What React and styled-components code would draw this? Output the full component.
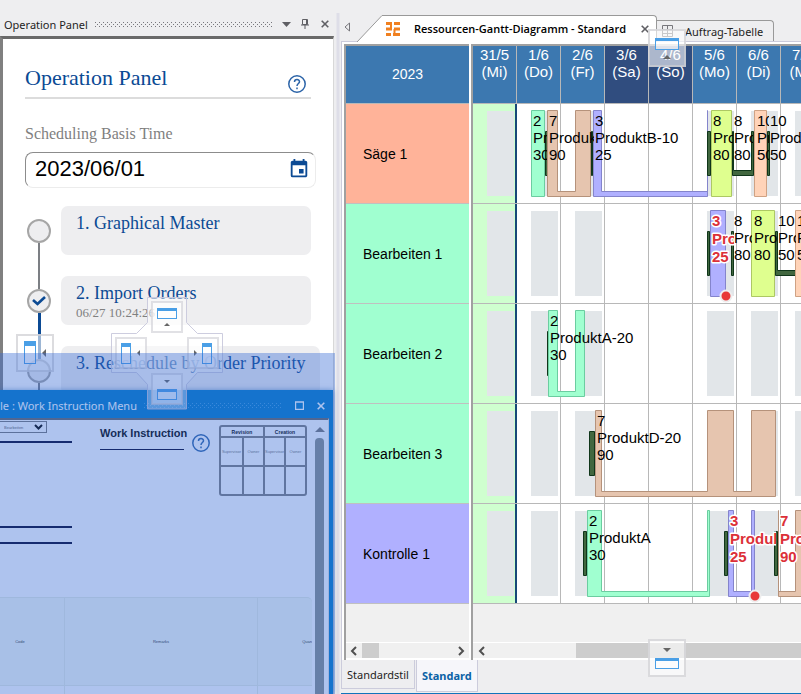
import React, { useState } from 'react';
import styled, { createGlobalStyle, css } from 'styled-components';
import { MdEvent } from 'react-icons/md';

const GlobalStyle = createGlobalStyle`
  * { box-sizing: border-box; }
  body {
    margin: 0;
    background: #eeeef0;
    font-family: "Noto Sans", "Open Sans", sans-serif;
    font-size: 12px;
    color: #1e1e1e;
    overflow: hidden;
  }
  button { font: inherit; color: inherit; border: 0; padding: 0; background: none; }
  h1, h2, p { margin: 0; font-weight: normal; }
`;

const Page = styled.div`
  display: flex;
  position: relative;
  height: 100vh;
  overflow: hidden;
`;

/* ---------- operation panel ---------- */

const Side = styled.aside`
  display: flex;
  flex-direction: column;
  flex: 0 0 334px;
  min-width: 0;
`;

const Splitter = styled.div`
  flex: 0 0 7px;
  margin-top: 13px;
  background: linear-gradient(to right, #eeeef0 2px, #dedee8 3px, #dedee8 5px, #eeeef0 6px);
`;

const Caption = styled.div`
  display: flex;
  align-items: center;
  height: 36px;
  padding: 12px 4px 0;
  font-size: 11px;
  white-space: nowrap;
`;

const Dots = styled.span`
  flex: 1;
  height: 5px;
  margin: 0 9px 0 7px;
  background-image: conic-gradient(from 270deg at 1px 1px, ${p => p.$color} 90deg, transparent 0),
    conic-gradient(from 270deg at 1px 1px, ${p => p.$color} 90deg, transparent 0);
  background-size: 4px 4px;
  background-position: 0 0, 2px 2px;
`;

const IconButton = styled.button`
  display: flex;
  align-items: center;
  justify-content: center;
  width: ${p => p.$w || 19}px;
  height: 16px;
`;

const PanelBody = styled.div`
  flex: 1;
  border: solid;
  border-width: 3px 1px 0 3px;
  border-color: #696969 #d8d8d8 #fff #808080;
  background: #fff;
  padding: 24px 22px 0;
  font-family: "Liberation Serif", serif;
`;

const PanelHead = styled.div`
  display: flex;
  justify-content: space-between;
  align-items: center;
  height: 36px;
  padding-right: 5px;
  border-bottom: 2px solid #dcdcdc;

  h1 {
    font-size: 22px;
    line-height: 28px;
    padding-bottom: 4px;
    color: #0b4a94;
  }

  svg { margin-top: 8px; }
`;

const FieldLabel = styled.label`
  display: block;
  margin: 25px 0 8px;
  font-size: 16px;
  line-height: 20px;
  color: #7f7f7f;
`;

const DateBox = styled.div`
  display: flex;
  align-items: center;
  height: 36px;
  margin-right: -5px;
  padding: 0 5px 3px 9px;
  border: 1px solid;
  border-color: #8c8c8c #ececec #ececec #8c8c8c;
  border-radius: 8px;
  color: #0b4a94;

  input {
    flex: 1;
    min-width: 0;
    padding: 0;
    border: 0;
    outline: 0;
    font: 22px "Liberation Sans", sans-serif;
    color: #000;
  }
`;

const Steps = styled.ol`
  list-style: none;
  margin: 18px 0 0;
  padding: 0;
`;

const Step = styled.li`
  display: grid;
  grid-template-columns: 28px 1fr;
  column-gap: 8px;
  height: 70px;
`;

const StepTrack = styled.div`
  display: flex;
  flex-direction: column;
  align-items: center;
  padding-top: 13px;

  &::after {
    content: "";
    width: ${p => (p.$done ? 3 : 2)}px;
    height: 46px;
    background: ${p => (p.$done ? '#0b4a94' : '#7c7f84')};
  }
`;

const StepMark = styled.span`
  display: flex;
  align-items: center;
  justify-content: center;
  flex: 0 0 24px;
  width: 24px;
  border: 2px solid #a6a6a6;
  border-radius: 50%;
  background: #eeeef0;
`;

const StepCard = styled.button`
  display: flex;
  flex-direction: column;
  align-items: flex-start;
  height: 49px;
  padding: 6px 15px;
  border-radius: 7px;
  background: #eeeef0;
  font-size: 18px;
  line-height: 22px;
  color: #0b4a94;
  white-space: nowrap;

  small {
    font-size: 13px;
    line-height: 18px;
    color: #808080;
  }
`;

/* ---------- floating window ---------- */

const Floating = styled.section`
  position: absolute;
  left: 0;
  top: 390px;
  bottom: 0;
  width: 333px;
  display: flex;
  flex-direction: column;
  padding-right: 4px;
  background: #007bc8;
  box-shadow: 0 0 5px rgba(0, 80, 160, .5);
  color: #fff;
`;

const FloatCaption = styled.header`
  display: flex;
  align-items: center;
  height: 28px;
  margin-right: -4px;
  padding-top: 3px;
  font-size: 11px;
  white-space: nowrap;
  overflow: hidden;

  h2 { font-size: inherit; }
`;

const FloatBody = styled.div`
  display: flex;
  flex: 1;
  min-height: 0;
  border-top: 2px solid #646464;
  border-right: 1px solid #e3e3e3;
  background: #fff;
  color: #000;
  font-family: "Liberation Sans", sans-serif;
`;

const Sheet = styled.div`
  flex: 1;
  min-width: 0;
  display: flex;
  flex-direction: column;
`;

const SheetTop = styled.div`
  display: flex;
  align-items: flex-start;
  height: 177px;
`;

const Fields = styled.div`
  width: 72px;
  margin-right: 28px;
`;

const Select = styled.div`
  position: relative;
  width: 47px;
  height: 12px;
  margin-top: 1px;
  border: 1px solid #777;
  border-left: 0;

  select {
    display: block;
    appearance: none;
    width: 100%;
    height: 10px;
    padding: 0 0 0 4px;
    border: 0;
    background: none;
    font: 4px "Liberation Sans", sans-serif;
    color: #666;
  }

  svg { position: absolute; right: 3px; top: 2px; pointer-events: none; }
`;

const Line = styled.div`
  height: 2px;
  margin-top: ${p => p.$gap}px;
  background: #00032c;
`;

const SheetTitle = styled.h2`
  width: 84px;
  margin-top: 5px;
  padding-bottom: 8px;
  border-bottom: 1px solid #00032c;
  font-size: 11px;
  line-height: 16px;
  font-weight: bold;
  white-space: nowrap;
`;

const HelpSlot = styled.div`
  margin: 14px 9px 0 8px;
`;

const Stamp = styled.table`
  width: 88px;
  margin-top: 5px;
  border: 2px solid #7d7d7d;
  border-radius: 3px;
  border-spacing: 0;
  table-layout: fixed;
  font-size: 4px;
  color: #777;

  th, td {
    height: 29px;
    padding: 0;
    overflow: hidden;
    text-align: center;
    border-left: 2px solid #7d7d7d;
    border-top: 2px solid #7d7d7d;
  }
  th {
    height: 9px;
    border-top: 0;
    font-size: 5px;
    color: #000;
  }
  th:first-child, td:first-child { border-left: 0; }
`;

const Items = styled.table`
  flex: 1;
  width: 312px;
  border-spacing: 0;
  table-layout: fixed;
  font-size: 4px;
  color: #333;

  th {
    height: 89px;
    padding: 0;
    overflow: hidden;
    border: solid #e6ede3;
    border-width: 1px 1px 1px 0;
    background: #f5fbf3;
    font-weight: normal;
  }
  td { border-right: 1px solid #e6ede3; }
  th:last-child { border-top-right-radius: 5px; border-right: 0; text-align: right; }
  td:last-child { border-right: 0; }
  th:first-child { padding-right: 24px; }
`;

const Scroller = styled.div`
  display: flex;
  flex-direction: column;
  align-items: center;
  width: 15px;
  padding: 7px 2px 0 0;

  &::after {
    content: "";
    flex: 1;
    width: 9px;
    margin-top: 6px;
    border-radius: 4px 4px 0 0;
    background: #878e8a;
  }
`;

/* ---------- document area ---------- */

const Documents = styled.main`
  position: relative;
  display: flex;
  flex-direction: column;
  flex: 1;
  min-width: 0;
  border-bottom: 1px solid #1174bb;
`;

const TabStrip = styled.div`
  display: flex;
  align-items: flex-end;
  height: 42px;
  flex: none;
  white-space: nowrap;
  border-bottom: 1px solid #ccccdc;
`;

const ScrollTabs = styled.button`
  display: flex;
  width: 16px;
  padding: 0 0 9px 3px;
`;

const ActiveTab = styled.div`
  display: flex;
  height: 27px;
  margin-bottom: -1px;
`;

const TabFace = styled.div`
  display: flex;
  align-items: center;
  gap: 14px;
  padding: 0 7px 1px 4px;
  border: 1px solid #999;
  border-width: 1px 1px 0 0;
  border-radius: 0 4px 0 0;
  background: #fff;
  color: #000;
  font-family: "Open Sans", sans-serif;
  font-size: 11px;
  font-weight: 600;
`;

const Tab = styled.button`
  display: flex;
  align-items: center;
  gap: 12px;
  height: 21px;
  padding: 0 10px 0 5px;
  border: 1px solid #999;
  border-width: 1px 1px 0 0;
  border-radius: 0 4px 0 0;
  font-size: 11px;
`;

const Frame = styled.div`
  display: flex;
  flex: 1;
  min-height: 0;
  border-left: 1px solid #ccccdc;
  padding: 2px 0 0 2px;
  background: #fff;
`;

const Pane = styled.div`
  display: flex;
  flex-direction: column;
  min-width: 0;
  border: solid #a0a0a0;
  border-width: 2px 0 0 2px;
  background: #f0f0f0;
  ${p => (p.$grow ? css`flex: 1;` : css`flex: 0 0 125px; margin-right: 2px;`)}
`;

const HeadCell = styled.div`
  height: 58px;
  padding-top: ${p => (p.$day ? 0 : 20)}px;
  border-bottom: 1px solid #b8b8b8;
  border-right: ${p => (p.$day ? 1 : 0)}px solid #b8b8b8;
  background: ${p => (p.$rest ? '#304d7f' : '#3c78b0')};
  color: #fff;
  font: ${p => (p.$day ? 15 : 14)}px/17px "Liberation Sans", sans-serif;
  text-align: center;
`;

const Days = styled.div`
  display: grid;
  grid-template-columns: repeat(8, 44px);
  overflow: hidden;
  background: #3c78b0;
`;

const Resource = styled.div`
  display: flex;
  align-items: center;
  height: 100px;
  padding-left: 17px;
  border-bottom: 1px solid #c0c0c0;
  background: ${p => p.$color};
  font: 14px "Liberation Sans", sans-serif;
  color: #000;
`;

const Lane = styled.div`
  height: 100px;
  overflow: hidden;
  border-bottom: 1px solid #b8b8b8;
  background: repeating-linear-gradient(to right, #fff 0, #fff 43px, #b8b8b8 43px, #b8b8b8 44px);
`;

const Chart = styled.svg`
  display: block;
  width: 352px;
  height: 99px;

  text { font: 15px "Liberation Sans", sans-serif; }
  .late text {
    font-weight: bold;
    fill: #dc3038;
    stroke: #fff;
    stroke-width: 3px;
    stroke-linejoin: round;
    paint-order: stroke;
  }
`;

const HScroll = styled.div`
  display: flex;
  align-items: stretch;
  height: 18px;
  margin-top: auto;
  border: solid #fff;
  border-width: 1px 0 2px;
`;

const Thumb = styled.div`
  ${p => (p.$grow ? css`flex: 1; margin-left: 86px;` : css`width: 17px; margin-right: auto;`)}
  background: #cdcdcd;
`;

const SheetTabs = styled.div`
  display: flex;
  align-items: flex-start;
  gap: 1px;
  height: 33px;
  flex: none;
`;

const SheetTab = styled.button`
  height: ${p => (p.$active ? 32 : 29)}px;
  padding: 0 5px;
  border: 1px solid #ccccdc;
  border-top: 0;
  background: ${p => (p.$active ? '#f6f6fa' : 'none')};
  color: ${p => (p.$active ? '#0a62a6' : '#1e1e1e')};
  font-size: 11px;
  font-weight: ${p => (p.$active ? 'bold' : 'normal')};
`;

/* ---------- docking guides ---------- */

const DockPreview = styled.div`
  position: absolute;
  left: 0;
  top: 353px;
  bottom: 0;
  width: 335px;
  background: rgba(52, 105, 212, .4);
  pointer-events: none;
`;

const EdgeGuide = styled.div`
  position: absolute;
  width: 38px;
  height: 38px;
  border: 2px solid rgba(205, 205, 210, .7);
  background: rgba(255, 255, 255, .6);
  ${p => p.$at === 'left' && css`left: 16px; top: 334px;`}
  ${p => p.$at === 'top' && css`right: 115px; top: 29px;`}
  ${p => p.$at === 'bottom' && css`right: 115px; bottom: 16px;`}

  svg { display: block; }
`;

const CenterGuide = styled.svg`
  position: absolute;
  left: 111px;
  top: 297px;
`;

const GuideIcon = ({ at }) => (
  <g>
    {at === 'top' && <><rect x="5.5" y="8.5" width="23" height="10" fill="#fff" fillOpacity=".6" stroke="#4a9fe6" /><path d="M5 7h24v3H5z" fill="#4a9fe6" /><path d="M17 24l4 4h-8z" fill="#666" /></>}
    {at === 'bottom' && <><rect x="5.5" y="17.5" width="23" height="10" fill="#fff" fillOpacity=".6" stroke="#4a9fe6" /><path d="M5 17h24v3H5z" fill="#4a9fe6" /><path d="M17 11l4-4h-8z" fill="#666" /></>}
    {at === 'left' && <><rect x="6.5" y="5.5" width="11" height="22" fill="#fff" fillOpacity=".6" stroke="#4a9fe6" /><path d="M6 5h12v5H6z" fill="#4a9fe6" /><path d="M24 17l4-4v8z" fill="#666" /></>}
  </g>
);

const centerParts = [
  { x: 40, y: 4, win: [6, 7, 20, 10], arrow: 'M16 22l3 3h-6z' },
  { x: 4, y: 40, win: [6, 6, 10, 20], arrow: 'M22 16l3-3v6z' },
  { x: 76, y: 40, win: [15, 6, 10, 20], arrow: 'M10 16l-3-3v6z' },
  { x: 40, y: 76, win: [6, 16, 20, 10], arrow: 'M16 10l3-3h-6z' },
];

const Compass = () => (
  <CenterGuide width="112" height="113" viewBox="0 0 112 113">
    <path
      d="M36.500 .5h39v25l11 11h25v39h-25l-11 12v24.500h-39V87.500l-11-12H.5v-39h25l11-11z"
      fill="#fff" fillOpacity=".45" stroke="#c8c8dc" strokeOpacity=".9"
    />
    {centerParts.map(({ x, y, win: [wx, wy, w, h], arrow }) => (
      <g key={arrow} transform={`translate(${x} ${y})`}>
        <rect x="1" y="1" width="30" height="30" fill="#fff" fillOpacity=".65" stroke="#d4d4da" strokeWidth="2" strokeOpacity=".7" />
        <rect x={wx + .5} y={wy + .5} width={w - 1} height={h} fill="#fff" fillOpacity=".5" stroke="#4a9fe6" />
        <rect x={wx} y={wy} width={w} height={h > 10 ? 4 : 3} fill="#4a9fe6" />
        <path d={arrow} fill="#666" />
      </g>
    ))}
  </CenterGuide>
);

/* ---------- small icons ---------- */

const Help = () => (
  <svg width="18" height="18" viewBox="0 0 18 18" fill="none" stroke="#2c64a8" strokeWidth="1.5">
    <circle cx="9" cy="9" r="8.200" />
    <path d="M6.500 7c0-3.400 5-3.200 5-.3 0 1.700-2.500 2-2.500 4.200M9 12.500v1.700" />
  </svg>
);

const Cross = ({ color = '#5f5f64', size = 8 }) => (
  <svg width={size} height={size} viewBox="0 0 8 8" stroke={color} strokeWidth="1.600">
    <path d="M.7 .7l6.600 6.600M7.300 .7L.7 7.300" />
  </svg>
);

const Arrow = ({ d }) => (
  <svg width="8" height="10" viewBox="0 0 8 10" fill="none" stroke="#505050" strokeWidth="2">
    <path d={d} />
  </svg>
);

/* ---------- schedule ---------- */

const days = [
  ['31/5', 'Mi'], ['1/6', 'Do'], ['2/6', 'Fr'], ['3/6', 'Sa'],
  ['4/6', 'So'], ['5/6', 'Mo'], ['6/6', 'Di'], ['7/6', 'Mi'],
];
const shifts = [0, 1, 2, 5, 6, 7];

const paint = {
  green: ['#a0ffd0', '#6bcda0'],
  tan: ['#e6c5af', '#b5927b'],
  violet: ['#b0b0ff', '#8484cc'],
  lime: ['#dfff8f', '#adc864'],
  peach: ['#ffd3b8', '#cfa284'],
  dark: ['#41673f', '#10361a'],
};

// bars: colour + working spans, joined along the bottom
// notes: x, visible width, three lines
const rows = [
  {
    name: 'Säge 1',
    color: '#ffb399',
    bars: [
      ['dark', [72, 74]], ['dark', [118, 119]], ['green', [58, 71]],
      ['tan', [74, 84], [102, 117]], ['violet', [120, 128], [234, 234]],
      ['dark', [234, 237]], ['lime', [238, 258]], ['dark', [259, 260], [278, 280]],
      ['dark', [294, 296]], ['peach', [281, 293]],
    ],
    notes: [
      [59, 15, '2', 'ProduktA', '30'], [75, 46, '7', 'ProduktD', '90'],
      [121, 100, '3', 'ProduktB-10', '25'], [239, 21, '8', 'ProduktC', '80'],
      [260, 20, '8', 'ProduktC', '80'], [283, 13, '10', 'ProduktE', '50'],
      [296, 32, '10', 'ProduktE', '50'],
    ],
  },
  {
    name: 'Bearbeiten 1',
    color: '#a0ffd0',
    bars: [
      ['dark', [234, 236]], ['violet', [237, 252]], ['dark', [258, 260]],
      ['lime', [278, 301]], ['dark', [302, 304], [322, 322]], ['peach', [322, 340]],
    ],
    notes: [
      [238, 23, '3', 'ProduktB', '25', true], [260, 19, '8', 'ProduktC', '80'],
      [280, 24, '8', 'ProduktC', '80'], [304, 19, '10', 'ProduktE', '50'],
      [323, 28, '10', 'ProduktE', '50'],
    ],
    end: 253,
  },
  {
    name: 'Bearbeiten 2',
    color: '#a0ffd0',
    bars: [['dark', [74, 75]], ['green', [75, 84], [102, 111]]],
    notes: [[76, 100, '2', 'ProduktA-20', '30']],
  },
  {
    name: 'Bearbeiten 3',
    color: '#a0ffd0',
    bars: [['dark', [116, 121]], ['tan', [122, 128], [234, 260], [278, 302]]],
    notes: [[123, 100, '7', 'ProduktD-20', '90']],
  },
  {
    name: 'Kontrolle 1',
    color: '#b0b0ff',
    bars: [
      ['dark', [110, 113]], ['green', [114, 128], [234, 236]],
      ['dark', [251, 254]], ['violet', [255, 260], [278, 281]],
      ['dark', [301, 304]], ['tan', [305, 305], [322, 340]],
    ],
    notes: [
      [115, 100, '2', 'ProduktA', '30'], [256, 47, '3', 'ProduktB', '25', true],
      [306, 46, '7', 'ProduktD', '90', true],
    ],
    end: 282,
  },
];

const barPath = (kind, spans) => {
  const [top, joint, bottom] = kind === 'dark' ? [27.5, 66.5, 71.5] : [6.5, 87.5, 92.5];
  const steps = spans.map(([a, b], i) => (
    `${i ? `H${a + .5}` : `M${a + .5} ${bottom}`}V${top}H${b + .5}V${i === spans.length - 1 ? bottom : joint}`
  ));
  return `${steps.join('')}Z`;
};

const LaneChart = ({ row }) => (
  <Chart viewBox="0 0 352 99">
    <rect width="42" height="99" fill="#cfffcf" />
    {shifts.map(d => <rect key={d} x={14 + d * 44} y="7" width="27" height="85" fill="#e2e6e9" />)}
    <rect x="42" width="2" height="99" fill="#184878" />
    {row.bars.map(([kind, ...spans]) => (
      <path key={kind + spans} d={barPath(kind, spans)} fill={paint[kind][0]} stroke={paint[kind][1]} />
    ))}
    {row.notes.map(([x, width, no, product, qty, late]) => (
      <svg key={x} x={x} y="0" width={width} height="99" className={late ? 'late' : undefined}>
        <text x="1" y="22">{no}</text>
        <text x="1" y={late ? 40 : 39}>{product}</text>
        <text x="1" y={late ? 58 : 56}>{qty}</text>
      </svg>
    ))}
    {row.end && <circle cx={row.end} cy="92" r="5.500" fill="#e83838" stroke="#eee" strokeWidth="2" />}
  </Chart>
);

const OperationPanel = () => {
  const [date, setDate] = useState('2023/06/01');

  return (
    <Side>
      <Caption>
        Operation Panel
        <Dots $color="#77777c" />
        <IconButton aria-label="Menu" $w={10}>
          <svg width="9" height="5"><path d="M0 0h9L4.500 5z" fill="#5f5f64" /></svg>
        </IconButton>
        <IconButton aria-label="Pin" $w={28}>
          <svg width="8" height="10" viewBox="0 0 8 10" fill="none" stroke="#5f5f64"><path d="M1.500 .5h5v5h-5zM5.500 .5v5M0 6h8M4 6v4" /></svg>
        </IconButton>
        <IconButton aria-label="Close" $w={11}><Cross /></IconButton>
      </Caption>
      <PanelBody>
        <PanelHead>
          <h1>Operation Panel</h1>
          <Help />
        </PanelHead>
        <FieldLabel htmlFor="basis">Scheduling Basis Time</FieldLabel>
        <DateBox>
          <input id="basis" type="text" value={date} onChange={e => setDate(e.target.value)} />
          <MdEvent size={22} />
        </DateBox>
        <Steps>
          <Step>
            <StepTrack><StepMark /></StepTrack>
            <StepCard>1. Graphical Master</StepCard>
          </Step>
          <Step>
            <StepTrack $done>
              <StepMark>
                <svg width="14" height="10" fill="none" stroke="#0b4a94" strokeWidth="2.600"><path d="M1 4l4.500 4L13 1" /></svg>
              </StepMark>
            </StepTrack>
            <StepCard>2. Import Orders<small>06/27 10:24:26</small></StepCard>
          </Step>
          <Step>
            <StepTrack><StepMark /></StepTrack>
            <StepCard>3. Reschedule by Order Priority</StepCard>
          </Step>
        </Steps>
      </PanelBody>
    </Side>
  );
};

const WorkInstruction = () => (
  <Floating>
    <FloatCaption>
      <h2>le : Work Instruction Menu</h2>
      <Dots $color="#3f9fe0" />
      <IconButton aria-label="Maximize">
        <svg width="9" height="9"><path d="M.5 1h8v7.500h-8zM0 1h9" fill="none" stroke="#fff" strokeWidth="1.400" /></svg>
      </IconButton>
      <IconButton aria-label="Close" $w={24}><Cross color="#fff" /></IconButton>
    </FloatCaption>
    <FloatBody>
      <Sheet>
        <SheetTop>
          <Fields>
            <Select>
              <select aria-label="Action"><option>Bearbeiten</option></select>
              <svg width="9" height="7" fill="none" stroke="#000" strokeWidth="2"><path d="M1 1l3.500 3.500L8 1" /></svg>
            </Select>
            <Line $gap={8} />
            <Line $gap={83} />
            <Line $gap={14} />
          </Fields>
          <SheetTitle>Work Instruction</SheetTitle>
          <HelpSlot><Help /></HelpSlot>
          <Stamp>
            <thead>
              <tr><th colSpan="2">Revision</th><th colSpan="2">Creation</th></tr>
            </thead>
            <tbody>
              <tr><td>Supervisor</td><td>Owner</td><td>Supervisor</td><td>Owner</td></tr>
              <tr><td /><td /><td /><td /></tr>
            </tbody>
          </Stamp>
        </SheetTop>
        <Items>
          <colgroup><col width="65" /><col width="193" /><col width="54" /></colgroup>
          <thead><tr><th>Code</th><th>Remarks</th><th>Quan</th></tr></thead>
          <tbody><tr><td /><td /><td /></tr></tbody>
        </Items>
      </Sheet>
      <Scroller>
        <svg width="10" height="5"><path d="M0 5h10L5 0z" fill="#777" /></svg>
      </Scroller>
    </FloatBody>
  </Floating>
);

const App = () => (
  <>
    <GlobalStyle />
    <Page>
      <OperationPanel />
      <Splitter />
      <Documents>
        <TabStrip>
          <ScrollTabs aria-label="Previous tab">
            <svg width="7" height="10"><path d="M5.500 1v8L1 5z" fill="none" stroke="#77777c" /></svg>
          </ScrollTabs>
          <ActiveTab>
            <svg width="25" height="27"><path d="M0 27L25 .5V27z" fill="#fff" /><path d="M0 27L25 .5" stroke="#999" /></svg>
            <TabFace>
              <svg width="14" height="14" fill="none" stroke="#f08020" strokeWidth="3">
                <path d="M0 1.500h6M8 1.500h6M0 7h6M8 7h6M0 12.500h5M7 12.500h7" />
                <path d="M5 1v6M8.500 7v6" strokeWidth="2" />
              </svg>
              Ressourcen-Gantt-Diagramm - Standard
              <IconButton aria-label="Close tab" $w={9}><Cross /></IconButton>
            </TabFace>
          </ActiveTab>
          <Tab>
            <svg width="11" height="12" fill="none" stroke="#77777c"><path d="M.5 .5h10v11H.5zM5.500 .5v11M.5 4.500h10M.5 8.500h10" /></svg>
            Auftrag-Tabelle
          </Tab>
        </TabStrip>
        <Frame>
          <Pane>
            <HeadCell>2023</HeadCell>
            {rows.map(row => <Resource key={row.name} $color={row.color}>{row.name}</Resource>)}
            <HScroll>
              <IconButton aria-label="Left" $w={16}><Arrow d="M6 1L2 5l4 4" /></IconButton>
              <Thumb />
              <IconButton aria-label="Right" $w={17}><Arrow d="M2 1l4 4-4 4" /></IconButton>
            </HScroll>
          </Pane>
          <Pane $grow>
            <Days>
              {days.map(([date, day]) => (
                <HeadCell key={date} $day $rest={day === 'Sa' || day === 'So'}>{date}<br />({day})</HeadCell>
              ))}
            </Days>
            {rows.map(row => <Lane key={row.name}><LaneChart row={row} /></Lane>)}
            <HScroll>
              <IconButton aria-label="Left" $w={17}><Arrow d="M6 1L2 5l4 4" /></IconButton>
              <Thumb $grow />
            </HScroll>
          </Pane>
        </Frame>
        <SheetTabs>
          <SheetTab>Standardstil</SheetTab>
          <SheetTab $active>Standard</SheetTab>
        </SheetTabs>
        <EdgeGuide $at="top"><svg width="34" height="34"><GuideIcon at="top" /></svg></EdgeGuide>
        <EdgeGuide $at="bottom"><svg width="34" height="34"><GuideIcon at="bottom" /></svg></EdgeGuide>
      </Documents>
      <WorkInstruction />
      <EdgeGuide $at="left"><svg width="34" height="34"><GuideIcon at="left" /></svg></EdgeGuide>
      <Compass />
      <DockPreview />
    </Page>
  </>
);

export default App;
